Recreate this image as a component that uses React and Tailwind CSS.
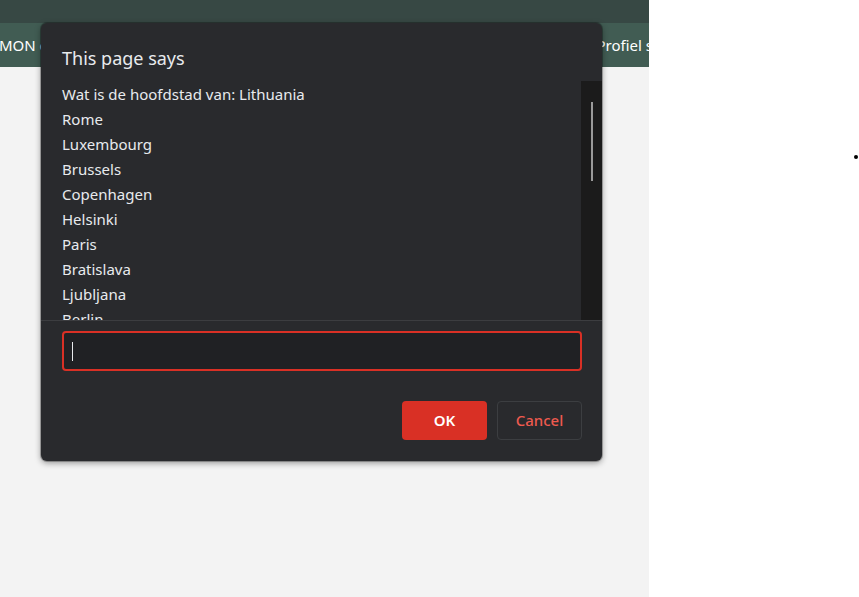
import React from "react";

const lines = [
  "Wat is de hoofdstad van: Lithuania",
  "Rome",
  "Luxembourg",
  "Brussels",
  "Copenhagen",
  "Helsinki",
  "Paris",
  "Bratislava",
  "Ljubljana",
  "Berlin",
  "Vilnius",
];

export default function App() {
  return (
    <div className="flex w-[859px] h-[597px] overflow-hidden bg-white font-['Noto_Sans',sans-serif]">
      {/* page behind the prompt */}
      <div className="relative w-[649px] h-full bg-[#f3f3f3] flex flex-col overflow-hidden">
        <div className="h-[23px] bg-[#374844]" />
        <div className="h-[44px] bg-[#415c53] flex items-center justify-between text-white text-[15px] whitespace-nowrap">
          <span className="-ml-[1px]">MON c</span>
          <span className="-mr-[4px]">Profiel s</span>
        </div>

        {/* prompt dialog */}
        <div className="absolute left-[41px] top-[23px] w-[561px] h-[438px] bg-[#292a2d] rounded-[6px] shadow-[0_0_0_1px_rgba(0,0,0,0.25),0_2px_6px_rgba(0,0,0,0.4)] flex flex-col">
          <div className="pt-[23px] pl-[21px] text-[18px] leading-[24px] text-[#e8eaed]">
            This page says
          </div>
          <div className="mt-[11px] h-[239px] flex overflow-hidden">
            <div className="flex-1 pt-[1px] pl-[21px] text-[15px] leading-[25px] text-[#e8eaed] overflow-hidden">
              {lines.map((l) => (
                <div key={l}>{l}</div>
              ))}
            </div>
            <div className="w-[21px] bg-[#1b1b1b] relative">
              <div className="absolute left-[10px] top-[21px] w-[2px] h-[79px] bg-[#9a9a9a]" />
            </div>
          </div>
          <div className="border-t border-[#3c3d40]" />
          <div className="mt-[10px] ml-[21px] w-[520px] h-[40px] rounded-[4px] border-2 border-[#d93025] bg-[#202124] flex items-center pl-[8px]">
            <span className="w-[1px] h-[19px] bg-[#e8eaed]" />
          </div>
          <div className="mt-[30px] mr-[20px] flex justify-end gap-[10px]">
            <button className="w-[85px] h-[39px] rounded-[4px] bg-[#d93025] text-white text-[15px] font-semibold">
              OK
            </button>
            <button className="w-[85px] h-[39px] rounded-[4px] border border-[#3c3e41] text-[#ee5a4f] text-[15px] font-medium">
              Cancel
            </button>
          </div>
        </div>
      </div>

      {/* right side */}
      <div className="flex-1 relative">
        <div className="absolute left-[205px] top-[155px] w-[4px] h-[4px] rounded-full bg-black" />
      </div>
    </div>
  );
}
